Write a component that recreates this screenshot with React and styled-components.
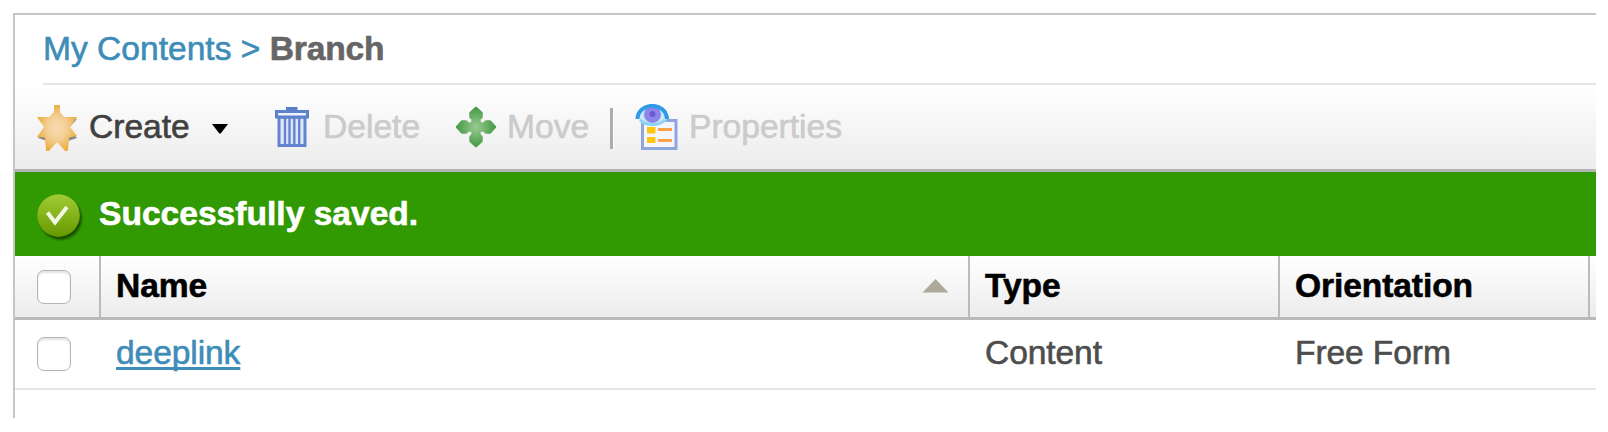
import React from "react";
import styled, { createGlobalStyle } from "styled-components";

const GlobalStyle = createGlobalStyle`
  *, *::before, *::after { box-sizing: border-box; }
  body {
    margin: 0;
    background: #fff;
    font-family: "Liberation Sans", Arial, sans-serif;
    font-size: 33.6px;
    line-height: 40px;
    color: #4d4d4d;
    overflow: hidden;
    -webkit-text-stroke: 0.6px currentColor;
  }
`;

const Page = styled.div`
  width: 1596px;
  height: 418px;
  padding: 13px 0 0 13px;
`;

const Panel = styled.main`
  height: 100%;
  border-top: 2px solid #c6c6c6;
  border-left: 2px solid #c6c6c6;
`;

const Breadcrumb = styled.nav`
  display: flex;
  align-items: center;
  height: 70px;
  margin-left: 28px;
  border-bottom: 2px solid #e6e6e6;
  white-space: pre;
  color: #3e8cb8;
`;

const Crumb = styled.a`
  color: #3e8cb8;
  text-decoration: none;
`;

const Current = styled.strong`
  letter-spacing: -0.2px;
  color: #666;
`;

const Toolbar = styled.div`
  display: flex;
  align-items: center;
  height: 87px;
  padding-left: 21px;
  background: linear-gradient(#fff, #ececec);
  border-bottom: 3px solid #b5b5b5;
`;

const Tool = styled.button`
  display: flex;
  align-items: center;
  gap: ${(p) => p.$gap}px;
  width: ${(p) => p.$width}px;
  flex: none;
  padding: 0;
  border: 0;
  background: none;
  font: inherit;
  text-align: left;
  color: ${(p) => (p.$muted ? "#cbcbcb" : "#404040")};

  svg { flex: none; display: block; }
`;

const MenuCaret = styled.span`
  display: flex;
  margin: 3px 0 0 10px;
`;

const Divider = styled.span`
  width: 4px;
  height: 41px;
  margin: 2px 21px 0 0;
  border-left: 3px solid #adadad;
  border-right: 1px solid #fff;
`;

const Notice = styled.div`
  display: flex;
  align-items: center;
  gap: 15px;
  height: 84px;
  padding: 0 0 1px 21px;
  background: #319902;
  color: #fff;
  font-weight: bold;

  svg { margin-top: 7px; }
`;

const Row = styled.div`
  display: grid;
  grid-template-columns: 86px 869px 310px 310px 1fr;
  height: ${(p) => (p.$head ? 64 : 70)}px;
  background: ${(p) => (p.$head ? "linear-gradient(#fff, #ececec)" : "#fff")};
  border-bottom: ${(p) => (p.$head ? "3px solid #b9b9b9" : "2px solid #e6e6e6")};
  font-weight: ${(p) => (p.$head ? "bold" : "normal")};
  letter-spacing: -0.1px;
  color: ${(p) => (p.$head ? "#000" : "#4d4d4d")};
`;

const Cell = styled.div`
  display: flex;
  align-items: center;
  justify-content: space-between;
  padding: 0 19px ${(p) => (p.$ruled ? 1 : 2)}px ${(p) => (p.$check ? 22 : 15)}px;
  border-right: 2px solid ${(p) => (p.$ruled ? "#bbb" : "transparent")};
`;

const Checkbox = styled.input`
  appearance: none;
  width: 34px;
  height: 34px;
  margin: 2px 0 0;
  border: 1.5px solid #b4b4b4;
  border-radius: 7px;
  background: #fff;
  box-shadow: inset 0 2px 2px #e4e4e4;
`;

const ItemLink = styled.a`
  color: #3e8cb8;
  text-decoration: underline;
  text-decoration-thickness: 2.5px;
  text-underline-offset: 3px;
  text-decoration-skip-ink: none;
`;

const StarIcon = () => (
  <svg width="42" height="47" viewBox="0 0 42 47">
    <defs>
      <radialGradient id="star">
        <stop offset="0" stopColor="#f6dbb0" />
        <stop offset=".5" stopColor="#f3cf95" />
        <stop offset="1" stopColor="#ecb144" />
      </radialGradient>
    </defs>
    <path d="M2 14l9 11-9 9 9 3 2 8 8-9 8 9 3-8 9-3-8-10 8-9z" fill="#6f6f6f" opacity=".8" />
    <path d="M18 1h6v7l4 5h13l-7 10 7 9-8 1.500-1 13.500h-3l-8-9-8 9h-3l-1-13.500L1 33l7-10-7-10h12l5-5z" fill="url(#star)" />
  </svg>
);

const CaretIcon = () => (
  <svg width="18" height="12" viewBox="0 0 18 12">
    <path d="M1 1h16L9.700 10.500H8.300z" fill="#000" />
  </svg>
);

const TrashIcon = () => (
  <svg width="36" height="42" viewBox="0 0 36 42">
    <path d="M12 1h11.500v4H12z" fill="#597fca" />
    <path d="M5 11h26v28.500H5z" fill="#dfe6f8" stroke="#6484d1" strokeWidth="3" />
    <path d="M11 11v28M15.500 11v28M20.300 11v28M25.200 11v28" stroke="#6685d1" strokeWidth="2.400" />
    <path d="M2.500 5.500h31v5.500h-31z" fill="#eef2fc" stroke="#5d82cc" strokeWidth="3" />
  </svg>
);

const MoveIcon = () => (
  <svg width="42" height="42" viewBox="0 0 42 42">
    <defs>
      <radialGradient id="move" gradientUnits="userSpaceOnUse" cx="21" cy="21" r="20">
        <stop offset="0" stopColor="#9acb94" />
        <stop offset="1" stopColor="#439943" />
      </radialGradient>
    </defs>
    <path
      d="M21 2l5.500 5v4L24.500 13v4.500H29l2-2h4l5 5.500-5 5.500h-4l-2-2h-4.500V29l2 2v4L21 40l-5.500-5v-4l2-2v-4.500H13l-2 2H7L2 21l5-5.500h4l2 2h4.500V13l-2-2V7z"
      fill="url(#move)"
      stroke="url(#move)"
      strokeWidth="2.500"
      strokeLinejoin="round"
    />
  </svg>
);

const PropertiesIcon = () => (
  <svg width="44" height="46" viewBox="0 0 44 46">
    <path d="M7.500 16.500h33.500v28h-33.500z" fill="#f5f5fd" stroke="#8ea6dd" strokeWidth="3" />
    <path d="M12 23h8.500v6.500H12zM12 33h8.500v6H12z" fill="#fdc70d" />
    <path d="M23 25.500h14M23 36.500h14" stroke="#ffa14b" strokeWidth="3" />
    <path d="M2 13C5-1 29-3 33 13 28 24 8 24 2 13z" fill="#c9e9fb" />
    <circle cx="17.500" cy="10.500" r="8.500" fill="#8d83ea" />
    <circle cx="17.500" cy="10" r="3" fill="#6a59cf" />
    <path d="M2.500 15C3-2 31-3 32 15" fill="none" stroke="#2e9be8" strokeWidth="4" />
    <path d="M5 16c6 6 19 6 25 0" fill="none" stroke="#8dd2f5" strokeWidth="3" />
  </svg>
);

const SuccessIcon = () => (
  <svg width="48" height="50" viewBox="0 0 48 50">
    <defs>
      <linearGradient id="ok" x2="0" y2="1">
        <stop offset="0" stopColor="#a2cc35" />
        <stop offset="1" stopColor="#669900" />
      </linearGradient>
      <filter id="shade" x="-20%" y="-20%" width="150%" height="150%">
        <feDropShadow dx="2" dy="3" stdDeviation="1.300" floodColor="#0c3b00" floodOpacity=".8" />
      </filter>
    </defs>
    <circle cx="22.500" cy="23.500" r="21.200" fill="url(#ok)" filter="url(#shade)" />
    <path d="M11.500 20.500l7.500 10L31 15" fill="none" stroke="#f2f7e4" strokeWidth="4" />
  </svg>
);

const SortIcon = () => (
  <svg width="27" height="16" viewBox="0 0 27 16">
    <path d="M13.500 1l13 13.500H.5z" fill="#aea999" />
  </svg>
);

export default function App() {
  return (
    <Page>
      <GlobalStyle />
      <Panel>
        <Breadcrumb>
          <Crumb>My Contents</Crumb> &gt; <Current>Branch</Current>
        </Breadcrumb>
        <Toolbar>
          <Tool $gap={11} $width={238}>
            <StarIcon />Create
            <MenuCaret><CaretIcon /></MenuCaret>
          </Tool>
          <Tool $muted $gap={13} $width={181}><TrashIcon />Delete</Tool>
          <Tool $muted $gap={10} $width={155}><MoveIcon />Move</Tool>
          <Divider />
          <Tool $muted $gap={10} $width={220}><PropertiesIcon />Properties</Tool>
        </Toolbar>
        <Notice><SuccessIcon />Successfully saved.</Notice>
        <Row $head>
          <Cell $ruled $check><Checkbox type="checkbox" /></Cell>
          <Cell $ruled>Name<SortIcon /></Cell>
          <Cell $ruled>Type</Cell>
          <Cell $ruled>Orientation</Cell>
        </Row>
        <Row>
          <Cell $check><Checkbox type="checkbox" /></Cell>
          <Cell><ItemLink>deeplink</ItemLink></Cell>
          <Cell>Content</Cell>
          <Cell>Free Form</Cell>
        </Row>
      </Panel>
    </Page>
  );
}
